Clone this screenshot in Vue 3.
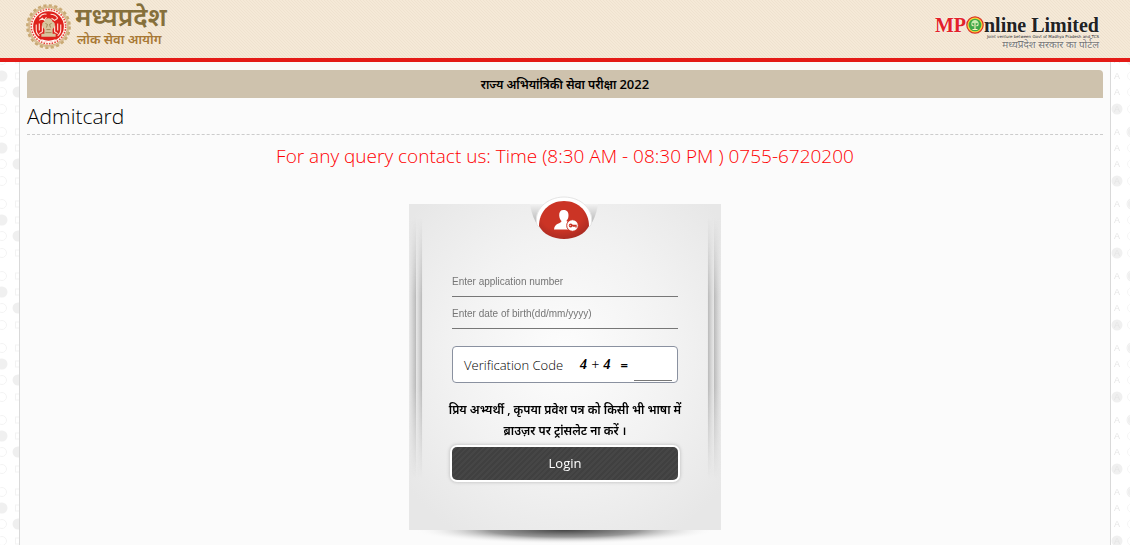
<template>
  <div class="layout">
    <header class="site-header">
      <svg class="texture" aria-hidden="true">
        <defs>
          <pattern id="paper" width="6" height="6" patternUnits="userSpaceOnUse">
            <path d="M0 0l6 6M3 0l3 3M0 3l3 3" stroke="#ede0cb" stroke-width="0.7" />
          </pattern>
        </defs>
        <rect width="100%" height="100%" fill="url(#paper)" />
      </svg>

      <a class="brand" href="#">
        <svg class="emblem" viewBox="0 0 46 46" aria-hidden="true">
          <circle cx="23" cy="23" r="20.5" fill="#dcc49c" />
          <circle cx="23" cy="23" r="20.7" fill="none" stroke="#c9a974" stroke-width="2.4" stroke-dasharray="3.1 2.3" />
          <circle cx="23" cy="23" r="18.4" fill="#fff4ea" stroke="#c9a672" stroke-width="0.8" />
          <circle cx="23" cy="23" r="16.8" fill="none" stroke="#e5433d" stroke-width="1.5" stroke-dasharray="1.5 1.2" />
          <circle cx="23" cy="23" r="15" fill="#de211c" />
          <path d="M14 14q3-4 7-3m4 0q5 0 7 4M14 17l3-2 2 2 2-3m5 1l3 2 3-2M11 21v5q0 4 3 6M14 20v7M17 22v6l-3 2M35 21v5q0 4-3 6M32 20v7M29 22v6l3 2" fill="none" stroke="#ffe4d9" stroke-width="1.1" />
          <path d="M19 18q-3 1-2 5l2 3v4h-3v3h14v-3h-3v-4l2-3q1-4-2-5-1-3-4-3t-4 3z" fill="#d9c49e" />
          <path d="M20 20l2 1-1 3m5-4l-2 1 1 3m-4 2h4m-5 3h6" fill="none" stroke="#9a7c47" stroke-width="0.8" />
          <path d="M16 36q7 3 14 0" fill="none" stroke="#fff" stroke-width="1.2" />
        </svg>
        <span class="brand-text">
          <span class="brand-name">मध्यप्रदेश</span>
          <span class="brand-sub">लोक सेवा आयोग</span>
        </span>
      </a>

      <a class="partner" href="#">
        <span class="partner-name">
          <span class="red">MP</span>
          <svg class="partner-o" viewBox="0 0 18 18" aria-hidden="true">
            <circle cx="9" cy="9" r="8.2" fill="#f4d438" stroke="#dd3326" stroke-width="1.2" />
            <circle cx="9" cy="9" r="6.3" fill="#3fa94a" />
            <path d="M9 5v9M5.500 8.500l2 1.500M12.500 8.500l-2 1.500M6.500 13.500h5" fill="none" stroke="#fff3c7" stroke-width="1.100" />
            <path d="M5 8q1-4 4-4t4 4q-2-1-4-1t-4 1z" fill="#c9ecb0" />
          </svg>
          <span>nline Limited</span>
        </span>
        <span class="partner-note">Joint venture between Govt of Madhya Pradesh and TCS</span>
        <span class="partner-sub">मध्यप्रदेश सरकार का पोर्टल</span>
      </a>
    </header>

    <div class="body">
      <svg class="gutter" aria-hidden="true">
        <defs>
          <pattern id="dots-left" width="19" height="72" y="59" patternUnits="userSpaceOnUse">
            <g fill="none" stroke="#f3f3f3">
              <circle v-for="y in rows" :key="y" cx="2" :cy="y" r="4.5" />
              <rect v-for="y in rows" :key="'b' + y" x="15.5" :y="y - 3" width="6" height="6" />
            </g>
            <circle cx="2" cy="27" r="5.5" fill="#f0f0f0" />
            <circle cx="18" cy="43" r="5.5" fill="#efefef" />
          </pattern>
        </defs>
        <rect width="100%" height="100%" fill="url(#dots-left)" />
      </svg>

      <main class="page">
        <h2 class="exam-title">राज्य अभियांत्रिकी सेवा परीक्षा <span class="year">2022</span></h2>
        <h1 class="page-title">Admitcard</h1>
        <p class="contact">For any query contact us: Time (8:30 AM - 08:30 PM ) 0755-6720200</p>

        <form class="card" @submit.prevent>
          <svg class="card-bg" viewBox="0 0 311 341" preserveAspectRatio="none" aria-hidden="true">
            <defs>
              <radialGradient id="sheet" cx="0.5" cy="0.46" r="0.65">
                <stop offset="0" stop-color="#fdfdfd" />
                <stop offset="0.55" stop-color="#f2f2f2" />
                <stop offset="1" stop-color="#e7e7e7" />
              </radialGradient>
              <radialGradient id="under">
                <stop offset="0" stop-color="#444" />
                <stop offset="0.5" stop-color="#999" />
                <stop offset="1" stop-color="#fbfbfb" stop-opacity="0" />
              </radialGradient>
              <linearGradient id="fold">
                <stop offset="0" stop-color="#c4c4c4" stop-opacity="0.1" />
                <stop offset="1" stop-color="#b8b8b8" />
              </linearGradient>
              <linearGradient id="fade" x1="0" y1="0" x2="0" y2="1">
                <stop offset="0" stop-color="#000" />
                <stop offset="0.3" stop-color="#fff" />
                <stop offset="0.65" stop-color="#fff" />
                <stop offset="1" stop-color="#000" />
              </linearGradient>
              <mask id="fold-mask">
                <rect x="0" y="14" width="311" height="260" fill="url(#fade)" />
              </mask>
            </defs>
            <ellipse cx="155" cy="326" rx="150" ry="14" fill="url(#under)" />
            <rect width="311" height="326" fill="url(#sheet)" />
            <g mask="url(#fold-mask)">
              <rect width="7" height="326" fill="url(#fold)" />
              <rect x="7" width="6" height="326" fill="url(#fold)" />
              <g transform="translate(311 0) scale(-1 1)">
                <rect width="7" height="326" fill="url(#fold)" />
                <rect x="7" width="6" height="326" fill="url(#fold)" />
              </g>
            </g>
          </svg>

          <svg class="badge" viewBox="0 0 70 46" aria-hidden="true">
            <defs>
              <radialGradient id="seal" cx="0.45" cy="0.35" r="0.7">
                <stop offset="0.6" stop-color="#cb3425" />
                <stop offset="1" stop-color="#a52a22" />
              </radialGradient>
              <linearGradient id="slot" x1="0" y1="0" x2="0" y2="1">
                <stop offset="0" stop-color="#f2f2f2" />
                <stop offset="1" stop-color="#a9a9a9" />
              </linearGradient>
            </defs>
            <path d="M1 9Q3 23 10 32H60Q67 23 69 9Z" fill="url(#slot)" />
            <path d="M8 30C4 15 18 2 35 2S66 15 62 30L60 32H10Z" fill="#fff" stroke="#e4e4e4" />
            <path d="M10 31C10 17 20 6 35 6S60 17 60 31C56 39 46 44 35 44S14 39 10 31Z" fill="url(#seal)" />
            <path d="M34.500 15c-3 0-4.500 2-4.300 5.500 .2 3 1.300 4.500 2.300 5.500-.2 3-7 1.500-7.500 8.500h17c-2-1.500-2.500-4.500-.5-7-1.500-.5-4-.5-4-1.700 1-1 2-3 2-5.300 .1-4-2-5.500-5-5.500z" fill="#fff" />
            <circle cx="43.500" cy="30.500" r="5.800" fill="#fff" stroke="#cb3425" />
            <circle cx="41.700" cy="30.500" r="1.900" fill="#cb3425" />
            <circle cx="41.200" cy="30.500" r="0.600" fill="#fff" />
            <path d="M43 30.500h4v2M45 30.500v1.500" fill="none" stroke="#cb3425" stroke-width="1.400" />
          </svg>

          <input v-model="applicationNo" class="field" type="text" aria-label="Application number" placeholder="Enter application number" />
          <input v-model="birthDate" class="field" type="text" aria-label="Date of birth" placeholder="Enter date of birth(dd/mm/yyyy)" />

          <div class="captcha">
            <label for="code">Verification Code</label>
            <span class="sum"><b>4</b> + <b>4</b></span>
            <b class="equals">=</b>
            <input id="code" v-model="code" type="text" />
          </div>

          <p class="notice">प्रिय अभ्यर्थी , कृपया प्रवेश पत्र को किसी भी भाषा में ब्राउज़र पर ट्रांसलेट ना करें ।</p>
          <button class="login" type="submit">Login</button>
        </form>
      </main>

      <svg class="gutter" aria-hidden="true">
        <defs>
          <pattern id="dots-right" width="19" height="72" y="59" patternUnits="userSpaceOnUse">
            <circle cx="6" cy="60" r="5.5" fill="#f0f0f0" />
            <circle cx="21" cy="11" r="5.5" fill="#efefef" />
            <g class="letters">
              <text v-for="y in rows" :key="y" x="3" :y="y + 3">A</text>
            </g>
            <circle v-for="y in rows" :key="'c' + y" cx="21" :cy="y" r="4.5" fill="none" stroke="#f5f5f5" />
          </pattern>
        </defs>
        <rect width="100%" height="100%" fill="url(#dots-right)" />
      </svg>
    </div>
  </div>
</template>

<script setup>
import { ref } from "vue";

const applicationNo = ref("");
const birthDate = ref("");
const code = ref("");

// vertical centres of the four marks in one background tile
const rows = [11, 27, 43, 60];
</script>

<style>
body {
  margin: 0;
  background: #fff;
}
</style>

<style scoped>
.layout {
  display: flex;
  flex-direction: column;
  min-height: 100vh;
  font-family: "Open Sans", "Noto Sans", sans-serif;
  color: #000;
}

.site-header {
  position: relative;
  display: flex;
  justify-content: space-between;
  align-items: flex-start;
  box-sizing: border-box;
  height: 62px;
  padding: 3px 30px 0 25px;
  border-bottom: 4px solid #e41b17;
  background: #f5e9d7;
}

.texture {
  position: absolute;
  inset: 0;
  width: 100%;
  height: 100%;
}

.brand,
.partner {
  position: relative;
  display: flex;
  text-decoration: none;
}

.brand {
  gap: 3px;
}

.emblem {
  width: 47px;
  height: 47px;
}

.brand-text {
  display: flex;
  flex-direction: column;
  font-family: "Noto Sans", sans-serif;
  font-weight: 600;
}

.brand-name {
  font-size: 26px;
  line-height: 27px;
  color: #86703b;
}

.brand-sub {
  padding-left: 2px;
  font-size: 13px;
  line-height: 18px;
  color: #a87834;
}

.partner {
  flex-direction: column;
  align-items: flex-end;
  padding: 12px 1px 0 0;
  text-shadow: 0 0 2px #fff;
}

.partner-name {
  display: flex;
  align-items: center;
  font: bold 20px/20px "Liberation Serif", serif;
  color: #222;
}

.partner-name .red {
  color: #e3212b;
}

.partner-o {
  width: 18px;
  height: 18px;
}

.partner-note {
  font: 4px/4px "DejaVu Sans", sans-serif;
  color: #222;
}

.partner-sub {
  font-size: 10px;
  line-height: 10px;
  color: #777;
}

.body {
  flex: 1;
  display: grid;
  grid-template-columns: 19px minmax(0, 1fr) 19px;
}

.gutter {
  width: 100%;
  height: 100%;
}

.letters {
  fill: #e6e6e6;
  font: 9px "Liberation Sans", sans-serif;
}

.page {
  padding: 8px 7px 0;
  border: solid #d9d9d9;
  border-width: 0 1px;
  background: #fbfbfb;
}

.exam-title {
  height: 28px;
  margin: 0;
  border-radius: 4px 4px 0 0;
  background: #cec2ad;
  font-size: 12px;
  font-weight: 600;
  line-height: 28px;
  text-align: center;
}

.year {
  font-size: 13px;
}

.page-title {
  margin: 0;
  border-bottom: 1px dashed #ccc;
  font-size: 21px;
  font-weight: 300;
  line-height: 36px;
}

.contact {
  margin: 8px 0 0;
  color: #f00;
  font-size: 19px;
  font-weight: 300;
  line-height: 26px;
  text-align: center;
}

.card {
  position: relative;
  box-sizing: border-box;
  width: 312px;
  height: 341px;
  margin: 35px auto 0;
  padding: 66px 43px 0;
}

.card-bg {
  position: absolute;
  inset: 0;
  width: 100%;
  height: 100%;
}

.badge {
  position: absolute;
  top: -9px;
  left: 120px;
  width: 70px;
  height: 46px;
}

.field {
  position: relative;
  display: block;
  box-sizing: border-box;
  width: 100%;
  height: 27px;
  margin: 0 0 5px;
  padding: 0 0 4px;
  border: 0;
  border-bottom: 1px solid #777;
  background: transparent;
  font: 10px "Liberation Sans", sans-serif;
}

.field::placeholder {
  color: #757575;
}

.captcha {
  position: relative;
  display: flex;
  align-items: center;
  box-sizing: border-box;
  height: 37px;
  margin-top: 17px;
  padding: 0 5px 0 11px;
  border: 1px solid #8a91a0;
  border-radius: 4px;
  background: #fff;
  font-size: 13px;
}

.sum {
  margin-left: auto;
  font: italic 14px "Liberation Serif", serif;
}

.captcha label {
  font-weight: 300;
}

.equals {
  margin: 0 6px 0 10px;
}

.captcha input {
  box-sizing: border-box;
  width: 38px;
  height: 33px;
  padding: 0;
  border: 0;
  border-bottom: 1px solid #777;
  background: transparent;
}

.notice {
  position: relative;
  margin: 16px -10px 0;
  font-size: 12px;
  font-weight: 600;
  line-height: 21px;
  text-align: center;
}

.login {
  position: relative;
  display: block;
  box-sizing: border-box;
  width: 100%;
  height: 33px;
  margin-top: 6px;
  padding: 0 0 2px;
  border: 0;
  border-radius: 5px;
  background: repeating-linear-gradient(135deg, #404040 0 2px, #464646 2px 4px);
  box-shadow: 0 0 0 2px #fff, 0 0 3px 3px #ccc;
  color: #fff;
  font: 13px "Open Sans", sans-serif;
  cursor: pointer;
}
</style>
